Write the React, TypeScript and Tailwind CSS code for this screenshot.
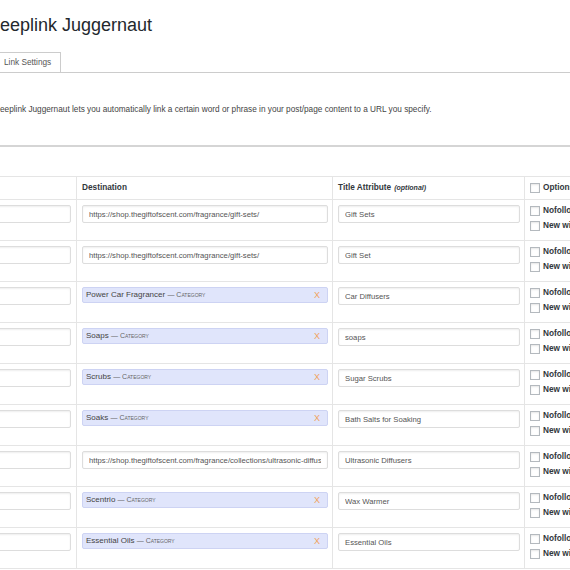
import React from 'react';

type Dest = { url?: string; term?: string };
type Row = { keyword: string; dest: Dest; title: string };

const GIFT = 'https://shop.thegiftofscent.com/fragrance/gift-sets/';

const rows: Row[] = [
    { keyword: 'gift sets', dest: { url: GIFT }, title: 'Gift Sets' },
    { keyword: 'gift set', dest: { url: GIFT }, title: 'Gift Set' },
    { keyword: 'car diffuser', dest: { term: 'Power Car Fragrancer' }, title: 'Car Diffusers' },
    { keyword: 'soaps', dest: { term: 'Soaps' }, title: 'soaps' },
    { keyword: 'scrubs', dest: { term: 'Scrubs' }, title: 'Sugar Scrubs' },
    { keyword: 'soaks', dest: { term: 'Soaks' }, title: 'Bath Salts for Soaking' },
    { keyword: 'diffuser', dest: { url: 'https://shop.thegiftofscent.com/fragrance/collections/ultrasonic-diffusers/' }, title: 'Ultrasonic Diffusers' },
    { keyword: 'wax warmer', dest: { term: 'Scentrio' }, title: 'Wax Warmer' },
    { keyword: 'essential oils', dest: { term: 'Essential Oils' }, title: 'Essential Oils' },
];

const TextBox: React.FC<{ value: string; width: string }> = ({ value, width }) => (
    <input
        readOnly
        value={value}
        className={`block ${width} h-[18px] border border-[#dddddd] rounded-[2px] bg-white px-[6px] text-[7.7px] text-[#555] shadow-[inset_0_1px_2px_rgba(0,0,0,0.07)] outline-none`}
    />
);

const Check: React.FC = () => (
    <span className="block w-[10px] h-[10px] shrink-0 border border-[#b4b9be] bg-white shadow-[inset_0_1px_2px_rgba(0,0,0,0.1)]" />
);

const TermChip: React.FC<{ term: string }> = ({ term }) => (
    <div className="w-[246px] h-[16px] flex items-center justify-between rounded-[2px] border border-[#cdd3f3] bg-[#e0e5fb] pl-[3px] pr-[7px]">
        <span className="text-[8px] text-[#444] whitespace-nowrap">
            {term} <span className="text-[7px] text-[#666]">— <span className="[font-variant:small-caps]">Category</span></span>
        </span>
        <span className="text-[9px] leading-[16px] text-[#f0a35e]">X</span>
    </div>
);

export default function App() {
    return (
        <div className="w-[570px] h-[570px] overflow-hidden bg-white font-['Liberation_Sans',Arial,sans-serif] text-[#444]">
            <h1 className="mt-[14px] -ml-[13px] h-[22px] leading-[22px] text-[18px] text-[#23282d] whitespace-nowrap">Deeplink Juggernaut</h1>

            <div className="mt-[16px] flex border-b border-[#cccccc]">
                <div className="-ml-[6px] w-[67px] h-[20px] border-t border-l border-r border-[#cccccc] pl-[9px] leading-[19px] text-[8.25px] text-[#555] whitespace-nowrap">
                    Link Settings
                </div>
            </div>

            <p className="mt-[31px] -ml-[6px] leading-[12px] text-[8.25px] text-[#444] whitespace-nowrap">
                Deeplink Juggernaut lets you automatically link a certain word or phrase in your post/page content to a URL you specify.
            </p>

            <div className="mt-[29px] h-[2px] bg-[#d5d5d5]" />

            <div className="mt-[29px] -ml-[100px] w-[800px] border-t border-[#e5e5e5]">
                <div className="grid grid-cols-[176px_256px_192px_176px] h-[23px] border-b border-[#e5e5e5] text-[8.25px] font-bold text-[#32373c]">
                    <div />
                    <div className="border-l border-[#e5e5e5] pl-[5px] flex items-center">Destination</div>
                    <div className="border-l border-[#e5e5e5] pl-[5px] flex items-center gap-[3px]">
                        Title Attribute <span className="italic text-[7px]">(optional)</span>
                    </div>
                    <div className="border-l border-[#e5e5e5] pl-[5px] flex items-center gap-[3px]">
                        <Check />
                        Options
                    </div>
                </div>

                {rows.map((r, i) => (
                    <div key={i} className="grid grid-cols-[176px_256px_192px_176px] h-[41px] border-b border-[#e5e5e5]">
                        <div className="pt-[5px] pl-[6px]">
                            <TextBox value={r.keyword} width="w-[165px]" />
                        </div>
                        <div className="border-l border-[#e5e5e5] pt-[5px] pl-[5px]">
                            {r.dest.term ? <TermChip term={r.dest.term} /> : <TextBox value={r.dest.url ?? ''} width="w-[246px]" />}
                        </div>
                        <div className="border-l border-[#e5e5e5] pt-[5px] pl-[5px]">
                            <TextBox value={r.title} width="w-[182px]" />
                        </div>
                        <div className="border-l border-[#e5e5e5] pt-[6px] pl-[5px] flex flex-col gap-[5px] text-[8.25px] font-bold text-[#32373c]">
                            <label className="flex items-center gap-[3px] h-[10px] whitespace-nowrap">
                                <Check />
                                Nofollow
                            </label>
                            <label className="flex items-center gap-[3px] h-[10px] whitespace-nowrap">
                                <Check />
                                New window
                            </label>
                        </div>
                    </div>
                ))}
            </div>
        </div>
    );
}
